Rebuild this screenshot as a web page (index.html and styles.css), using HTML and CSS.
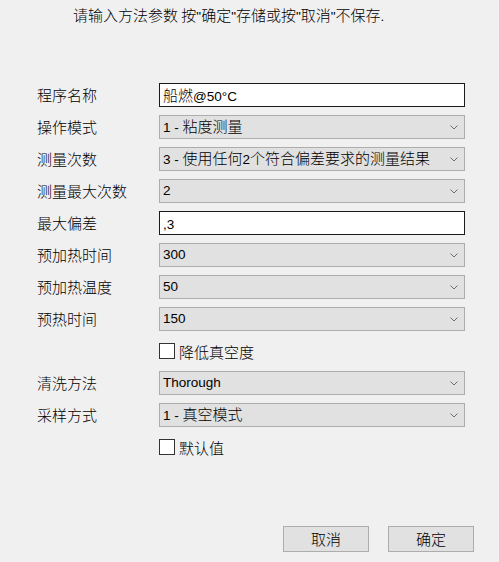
FILE: index.html
```html
<!DOCTYPE html>
<html lang="zh-CN">
<head>
<meta charset="utf-8">
<title>方法参数</title>
<link rel="stylesheet" href="styles.css">
</head>
<body>
<div class="dialog">
  <div class="header">请输入方法参数 按<span class="lat">"</span>确定<span class="lat">"</span>存储或按<span class="lat">"</span>取消<span class="lat">"</span>不保存<span class="lat">.</span></div>
  <div class="form">
    <div class="label">程序名称</div>
    <div class="input">船燃<span class="lat">@50°C</span></div>

    <div class="label">操作模式</div>
    <div class="combo"><span><span class="lat">1 - </span>粘度测量</span><svg class="chev" width="8" height="5" viewBox="0 0 8 5"><path d="M0.5 0.5 L4 4 L7.5 0.5" fill="none" stroke="#6d6d6d" stroke-width="1"/></svg></div>

    <div class="label">测量次数</div>
    <div class="combo"><span><span class="lat">3 - </span>使用任何<span class="lat">2</span>个符合偏差要求的测量结果</span><svg class="chev" width="8" height="5" viewBox="0 0 8 5"><path d="M0.5 0.5 L4 4 L7.5 0.5" fill="none" stroke="#6d6d6d" stroke-width="1"/></svg></div>

    <div class="label">测量最大次数</div>
    <div class="combo"><span class="lat">2</span><svg class="chev" width="8" height="5" viewBox="0 0 8 5"><path d="M0.5 0.5 L4 4 L7.5 0.5" fill="none" stroke="#6d6d6d" stroke-width="1"/></svg></div>

    <div class="label">最大偏差</div>
    <div class="input"><span class="lat">,3</span></div>

    <div class="label">预加热时间</div>
    <div class="combo"><span class="lat">300</span><svg class="chev" width="8" height="5" viewBox="0 0 8 5"><path d="M0.5 0.5 L4 4 L7.5 0.5" fill="none" stroke="#6d6d6d" stroke-width="1"/></svg></div>

    <div class="label">预加热温度</div>
    <div class="combo"><span class="lat">50</span><svg class="chev" width="8" height="5" viewBox="0 0 8 5"><path d="M0.5 0.5 L4 4 L7.5 0.5" fill="none" stroke="#6d6d6d" stroke-width="1"/></svg></div>

    <div class="label">预热时间</div>
    <div class="combo"><span class="lat">150</span><svg class="chev" width="8" height="5" viewBox="0 0 8 5"><path d="M0.5 0.5 L4 4 L7.5 0.5" fill="none" stroke="#6d6d6d" stroke-width="1"/></svg></div>

    <div class="label"></div>
    <div class="check"><span class="box"></span><span>降低真空度</span></div>

    <div class="label">清洗方法</div>
    <div class="combo"><span class="lat">Thorough</span><svg class="chev" width="8" height="5" viewBox="0 0 8 5"><path d="M0.5 0.5 L4 4 L7.5 0.5" fill="none" stroke="#6d6d6d" stroke-width="1"/></svg></div>

    <div class="label">采样方式</div>
    <div class="combo"><span><span class="lat">1 - </span>真空模式</span><svg class="chev" width="8" height="5" viewBox="0 0 8 5"><path d="M0.5 0.5 L4 4 L7.5 0.5" fill="none" stroke="#6d6d6d" stroke-width="1"/></svg></div>

    <div class="label"></div>
    <div class="check"><span class="box"></span><span>默认值</span></div>
  </div>
  <div class="footer">
    <div class="button">取消</div>
    <div class="button">确定</div>
  </div>
</div>
</body>
</html>
```
FILE: styles.css
```css
html, body {
  margin: 0;
  padding: 0;
  background: #f0f0f0;
}
body {
  font-family: "Noto Sans CJK SC", "Noto Sans", sans-serif;
  font-size: 15px;
  font-weight: 300;
  color: #000;
}
.lat {
  font-family: "Liberation Sans", Arial, sans-serif;
  font-size: 13.5px;
  font-weight: 400;
  white-space: pre;
}
.dialog {
  width: 499px;
  height: 562px;
  box-sizing: border-box;
  display: flex;
  flex-direction: column;
  padding: 0 25px 10px 37px;
}
.header {
  height: 30px;
  line-height: 30px;
  padding-left: 36px;
}
.form {
  margin-top: 53px;
  display: grid;
  grid-template-columns: 122px 306px;
  grid-auto-rows: 24px;
  row-gap: 8px;
}
.label {
  line-height: 24px;
  white-space: nowrap;
}
.input {
  box-sizing: border-box;
  border: 1px solid #1a1a1a;
  background: #fff;
  line-height: 22px;
  padding-left: 3px;
  white-space: nowrap;
  overflow: hidden;
}
.combo {
  box-sizing: border-box;
  border: 1px solid #adadad;
  background: #e1e1e1;
  display: flex;
  align-items: center;
  justify-content: space-between;
  padding: 0 6px 0 3px;
  white-space: nowrap;
}
.combo > span {
  line-height: 22px;
}
.chev {
  display: block;
  flex: none;
}
.check {
  display: flex;
  align-items: center;
  gap: 4px;
}
.box {
  width: 14px;
  height: 14px;
  border: 1px solid #333;
  background: #fff;
  flex: none;
}
.footer {
  margin-top: auto;
  display: flex;
  justify-content: flex-end;
  gap: 19px;
}
.button {
  box-sizing: border-box;
  width: 86px;
  height: 26px;
  border: 1px solid #adadad;
  background: #e1e1e1;
  text-align: center;
  line-height: 24px;
}
```
